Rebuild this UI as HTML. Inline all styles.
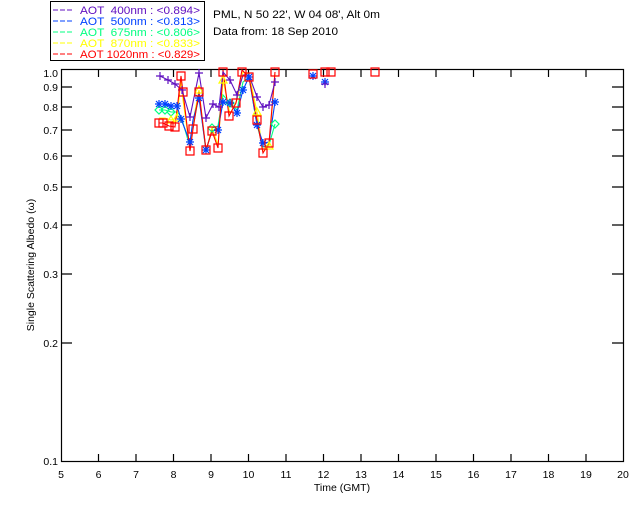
<!DOCTYPE html>
<html><head><meta charset="utf-8"><style>
html,body{margin:0;padding:0;background:#fff;}
svg{display:block;}
text{font-family:"Liberation Sans",sans-serif;white-space:pre;}
</style></head><body>
<svg width="640" height="512" viewBox="0 0 640 512" xmlns="http://www.w3.org/2000/svg" xml:space="preserve">
<defs>
<path id="sq" d="M-4,-4h8v8h-8z" fill="none" stroke="#f00" stroke-width="1.2"/>
<path id="pl" d="M-4,0h8M0,-4v8" stroke="#6010c0" stroke-width="1.2"/>
<path id="as" d="M-4,0h8M0,-4v8M-3,-3l6,6M-3,3l6,-6" stroke="#0040ff" stroke-width="1.2"/>
<path id="tr" d="M0,-4l4,7h-8z" fill="none" stroke="#ff0" stroke-width="1.2"/>
<path id="di" d="M0,-4l4,4l-4,4l-4,-4z" fill="none" stroke="#00ff80" stroke-width="1.2"/>
</defs>
<rect x="50.5" y="1.5" width="154" height="59" fill="none" stroke="#000" stroke-width="1"/>
<g font-size="11">
<line x1="53" y1="10" x2="73" y2="10" stroke="#6010c0" stroke-dasharray="5,2"/>
<text x="80" y="14" fill="#6010c0" textLength="120" lengthAdjust="spacingAndGlyphs">AOT  400nm : &lt;0.894&gt;</text>
<line x1="53" y1="21" x2="73" y2="21" stroke="#0040ff" stroke-dasharray="5,2"/>
<text x="80" y="25" fill="#0040ff" textLength="120" lengthAdjust="spacingAndGlyphs">AOT  500nm : &lt;0.813&gt;</text>
<line x1="53" y1="32" x2="73" y2="32" stroke="#00ff80" stroke-dasharray="5,2"/>
<text x="80" y="36" fill="#00ff80" textLength="120" lengthAdjust="spacingAndGlyphs">AOT  675nm : &lt;0.806&gt;</text>
<line x1="53" y1="43" x2="73" y2="43" stroke="#ff0" stroke-dasharray="5,2"/>
<text x="80" y="47" fill="#ff0" textLength="120" lengthAdjust="spacingAndGlyphs">AOT  870nm : &lt;0.833&gt;</text>
<line x1="53" y1="54" x2="73" y2="54" stroke="#f00" stroke-dasharray="5,2"/>
<text x="80" y="58" fill="#f00" textLength="120" lengthAdjust="spacingAndGlyphs">AOT 1020nm : &lt;0.829&gt;</text>
</g>
<text x="213" y="18" font-size="11" textLength="167" lengthAdjust="spacingAndGlyphs">PML, N 50 22', W 04 08', Alt 0m</text>
<text x="213" y="35" font-size="11" textLength="125" lengthAdjust="spacingAndGlyphs">Data from: 18 Sep 2010</text>
<rect x="61.5" y="69.5" width="562" height="392" fill="none" stroke="#000" stroke-width="1.2"/>
<g stroke="#000" stroke-width="1.2">
<path d="M98.5,69v8M136,69v8M173.5,69v8M211,69v8M248.5,69v8M286,69v8M323.5,69v8M361,69v8M398.5,69v8M436,69v8M473.5,69v8M511,69v8M548.5,69v8M586,69v8"/>
<path d="M98.5,462v-8M136,462v-8M173.5,462v-8M211,462v-8M248.5,462v-8M286,462v-8M323.5,462v-8M361,462v-8M398.5,462v-8M436,462v-8M473.5,462v-8M511,462v-8M548.5,462v-8M586,462v-8"/>
<path d="M61,87h11M61,107h11M61,130h11M61,156h11M61,187h11M61,225h11M61,274h11M61,343h11"/>
<path d="M623,87h-11M623,107h-11M623,130h-11M623,156h-11M623,187h-11M623,225h-11M623,274h-11M623,343h-11"/>
</g>
<g font-size="10.5" text-anchor="end">
<text x="58" y="77">1.0</text><text x="58" y="91">0.9</text><text x="58" y="111">0.8</text>
<text x="58" y="134">0.7</text><text x="58" y="160">0.6</text><text x="58" y="191">0.5</text>
<text x="58" y="229">0.4</text><text x="58" y="278">0.3</text><text x="58" y="347">0.2</text>
<text x="58" y="465">0.1</text>
</g>
<g font-size="10.5" text-anchor="middle">
<text x="61" y="478">5</text><text x="98.5" y="478">6</text><text x="136" y="478">7</text><text x="173.5" y="478">8</text><text x="211" y="478">9</text><text x="248.5" y="478">10</text><text x="286" y="478">11</text><text x="323.5" y="478">12</text><text x="361" y="478">13</text><text x="398.5" y="478">14</text><text x="436" y="478">15</text><text x="473.5" y="478">16</text><text x="511" y="478">17</text><text x="548.5" y="478">18</text><text x="586" y="478">19</text><text x="623" y="478">20</text>
<text x="342" y="491">Time (GMT)</text>
</g>
<text transform="translate(34,265) rotate(-90)" font-size="10.5" text-anchor="middle">Single Scattering Albedo (ω)</text>
<g fill="none" stroke-width="1.1">
<polyline stroke="#00ff80" points="159,110 165,110 171,112 177,112 181,116 190,147 193,127 199,95 206,152 212,128 218,126 223,95 230,103 237,110 243,82 249,77 257,125 263,147 269,145 275,124"/>
<polyline stroke="#ff0" points="159,118 165,118 171,120 177,118 181,80 183,100 190,150 193,122 199,90 206,151 212,128 218,145 223,80 230,114 237,100 243,72 249,74 257,112 263,152 269,146 275,74"/>
<polyline stroke="#0040ff" points="159,104 165,104 171,106 177,106 181,119 190,142 193,120 199,98 206,150 212,131 218,130 223,102 230,103 237,113 243,90 249,77 257,125 263,143 269,142 275,102"/>
<polyline stroke="#f00" points="159,123 163,123 169,126 175,127 181,76 183,92 190,151 193,129 199,92 206,150 212,131 218,148 223,70 229,116 236,103 242,70 249,77 257,120 263,153 269,143 275,72"/>
<polyline stroke="#6010c0" points="160,76 168,80 175,84 182,90 190,117 199,73 206,118 213,104 219,107 223,72 230,80 237,95 243,75 249,75 257,97 263,107 269,105 275,82"/>
</g>
<g>
<use href="#di" x="159" y="110"/><use href="#di" x="165" y="110"/><use href="#di" x="171" y="112"/><use href="#di" x="230" y="103"/><use href="#di" x="275" y="124"/><use href="#di" x="212" y="128"/>
<use href="#tr" x="171" y="120"/><use href="#tr" x="177" y="118"/><use href="#tr" x="223" y="80"/><use href="#tr" x="257" y="112"/><use href="#tr" x="269" y="146"/><use href="#tr" x="199" y="90"/>
<use href="#as" x="159" y="104"/><use href="#as" x="165" y="104"/><use href="#as" x="171" y="106"/><use href="#as" x="177" y="106"/><use href="#as" x="181" y="119"/><use href="#as" x="190" y="142"/><use href="#as" x="199" y="98"/><use href="#as" x="206" y="150"/><use href="#as" x="218" y="130"/><use href="#as" x="223" y="102"/><use href="#as" x="230" y="103"/><use href="#as" x="237" y="113"/><use href="#as" x="243" y="90"/><use href="#as" x="249" y="77"/><use href="#as" x="257" y="125"/><use href="#as" x="263" y="143"/><use href="#as" x="275" y="102"/><use href="#as" x="325" y="82"/><use href="#as" x="313" y="76"/>
<use href="#pl" x="160" y="76"/><use href="#pl" x="168" y="80"/><use href="#pl" x="175" y="84"/><use href="#pl" x="182" y="90"/><use href="#pl" x="190" y="117"/><use href="#pl" x="199" y="73"/><use href="#pl" x="206" y="118"/><use href="#pl" x="213" y="104"/><use href="#pl" x="219" y="107"/><use href="#pl" x="230" y="80"/><use href="#pl" x="237" y="95"/><use href="#pl" x="257" y="97"/><use href="#pl" x="263" y="107"/><use href="#pl" x="269" y="105"/><use href="#pl" x="275" y="82"/><use href="#pl" x="325" y="84"/>
<use href="#sq" x="159" y="123"/><use href="#sq" x="163" y="123"/><use href="#sq" x="169" y="126"/><use href="#sq" x="175" y="127"/><use href="#sq" x="181" y="76"/><use href="#sq" x="183" y="92"/><use href="#sq" x="190" y="151"/><use href="#sq" x="193" y="129"/><use href="#sq" x="199" y="92"/><use href="#sq" x="206" y="150"/><use href="#sq" x="212" y="131"/><use href="#sq" x="218" y="148"/><use href="#sq" x="223" y="72"/><use href="#sq" x="229" y="116"/><use href="#sq" x="236" y="103"/><use href="#sq" x="242" y="72"/><use href="#sq" x="249" y="77"/><use href="#sq" x="257" y="120"/><use href="#sq" x="263" y="153"/><use href="#sq" x="269" y="143"/><use href="#sq" x="275" y="72"/><use href="#sq" x="313" y="74"/><use href="#sq" x="325" y="72"/><use href="#sq" x="331" y="72"/><use href="#sq" x="375" y="72"/>
</g>
</svg>
</body></html>
